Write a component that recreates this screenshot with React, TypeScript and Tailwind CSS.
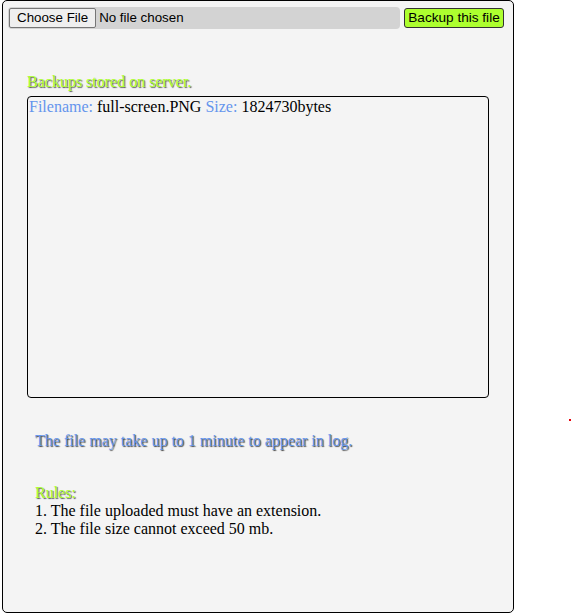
export default function App() {
  return (
    <div className="relative w-[571px] h-[616px] bg-white font-['Liberation_Serif',serif] text-[16px] text-black">
      <div className="ml-[2px] w-[512px] h-[613px] border border-black rounded-[5px] bg-[#f4f4f4]">
        {/* upload row */}
        <div className="flex items-center pt-[6px] pl-[5px]">
          <div className="flex items-center w-[392px] h-[22px] rounded-[4px] bg-[#d3d3d3] pl-[1px] font-['Liberation_Sans',Arial,sans-serif] text-[13.33px]">
            <div className="flex items-center h-[20px] px-[7px] bg-[#efefef] border border-[#767676] rounded-[2px]">
              Choose File
            </div>
            <span className="ml-[3px]">No file chosen</span>
          </div>
          <button className="ml-[4px] w-[100px] h-[20px] bg-[#adff2f] border border-[#333] rounded-[3px] font-['Liberation_Sans',Arial,sans-serif] text-[13.6px] leading-none text-black">
            Backup this file
          </button>
        </div>

        <div className="pl-[24px] mt-[44px] leading-[18px]">
          <div className="text-[#adff2f] [text-shadow:1px_1px_1px_#555]">Backups stored on server.</div>
          <div className="w-[462px] h-[302px] mt-[5px] border border-black rounded-[4px] px-[1px] pt-[1px]">
            <span className="text-[#6495ed]">Filename: </span>
            <span>full-screen.PNG </span>
            <span className="text-[#6495ed]">Size: </span>
            <span>1824730bytes</span>
          </div>
        </div>

        <div className="pl-[32px] mt-[34px] leading-[18px]">
          <div className="text-[#6495ed] [text-shadow:1px_1px_1px_#444]">The file may take up to 1 minute to appear in log.</div>
          <div className="mt-[34px] text-[#adff2f] [text-shadow:1px_1px_1px_#555]">Rules:</div>
          <div>1. The file uploaded must have an extension.</div>
          <div>2. The file size cannot exceed 50 mb.</div>
        </div>
      </div>
      <div className="absolute left-[569px] top-[419px] w-[2px] h-[2px] bg-red-600" />
    </div>
  );
}
